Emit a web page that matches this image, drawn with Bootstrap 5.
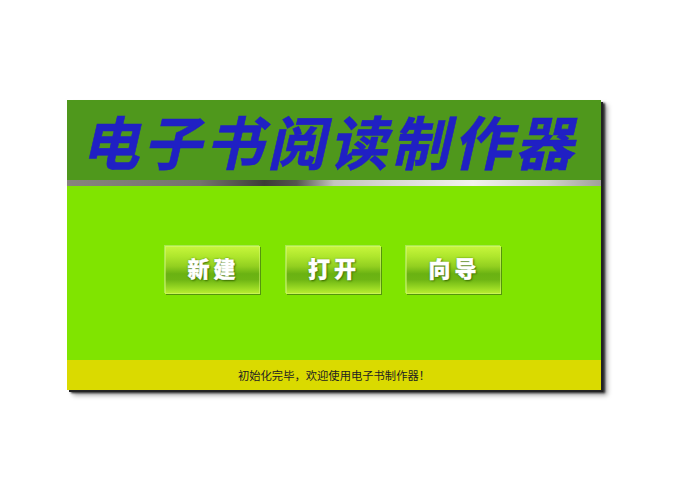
<!DOCTYPE html>
<html lang="zh">
<head>
<meta charset="utf-8">
<title>电子书阅读制作器</title>
<link href="https://cdn.jsdelivr.net/npm/bootstrap@5.3.0/dist/css/bootstrap.min.css" rel="stylesheet">
<style>
html,body{height:100%;background:#fff;overflow:hidden}
body{padding:100px 0 0 67px;font-family:"Liberation Sans","Noto Sans CJK SC",sans-serif}
.app-panel{width:534px;height:290px;box-shadow:2px 2px 0 #222,4px 3px 2px #2a2a2a,6px 5px 5px rgba(0,0,0,.4)}
.app-head{height:80px;background:#4f981c;color:#2020c4;font-size:58px;font-weight:700;line-height:80px;padding-left:20px;white-space:nowrap;font-family:"Noto Sans CJK SC",sans-serif}
.app-title{letter-spacing:4px;transform:skewX(-13deg);margin-top:-5px;-webkit-text-stroke:.6px #2020c4}
.app-rule{height:6px;background:linear-gradient(90deg,#87847e 0,#74736c 25%,#3c3c36 37%,#55554e 43%,#c4c4be 50%,#d8d8d4 60%,#f2f2ee 76%,#d2d2cc 90%,#a0a09a 100%)}
.app-main{height:174px;background:#80e400;gap:25.5px;padding:60px 2px 0 0}
.app-btn{width:95px;height:48px;border:0;border-radius:0;padding:0 0 5px;color:#fff;font-size:22px;font-weight:900;letter-spacing:4px;text-indent:2px;font-family:"Noto Sans CJK SC",sans-serif;-webkit-text-stroke:.4px #fff;text-shadow:1px 1px 2px #3a6a00,0 0 2px #4a8a00;background:linear-gradient(180deg,#c8f63c 0,#aee62c 22%,#93d020 42%,#6ab212 58%,#6eb514 70%,#95d622 86%,#bcf032 100%);box-shadow:inset 0 0 0 1px rgba(215,250,120,.5),1px 1px 0 #55950c,-1px -1px 0 #a8ea50}
.app-btn:hover{color:#fff;background:linear-gradient(180deg,#c8f63c 0,#aee62c 22%,#93d020 42%,#6ab212 58%,#6eb514 70%,#95d622 86%,#bcf032 100%)}
.app-status{height:30px;background:#dada00;color:#222;font-size:11.3px;line-height:31px;padding-left:0;font-family:"Noto Sans CJK SC",sans-serif}
</style>
</head>
<body>
<div class="app-panel d-flex flex-column">
  <div class="app-head"><div class="app-title d-inline-block">电子书阅读制作器</div></div>
  <div class="app-rule"></div>
  <div class="app-main d-flex justify-content-center align-items-start">
    <button type="button" class="btn app-btn">新建</button>
    <button type="button" class="btn app-btn">打开</button>
    <button type="button" class="btn app-btn">向导</button>
  </div>
  <div class="app-status text-center">初始化完毕，欢迎使用电子书制作器！</div>
</div>
<script src="https://cdn.jsdelivr.net/npm/bootstrap@5.3.0/dist/js/bootstrap.bundle.min.js"></script>
</body>
</html>
